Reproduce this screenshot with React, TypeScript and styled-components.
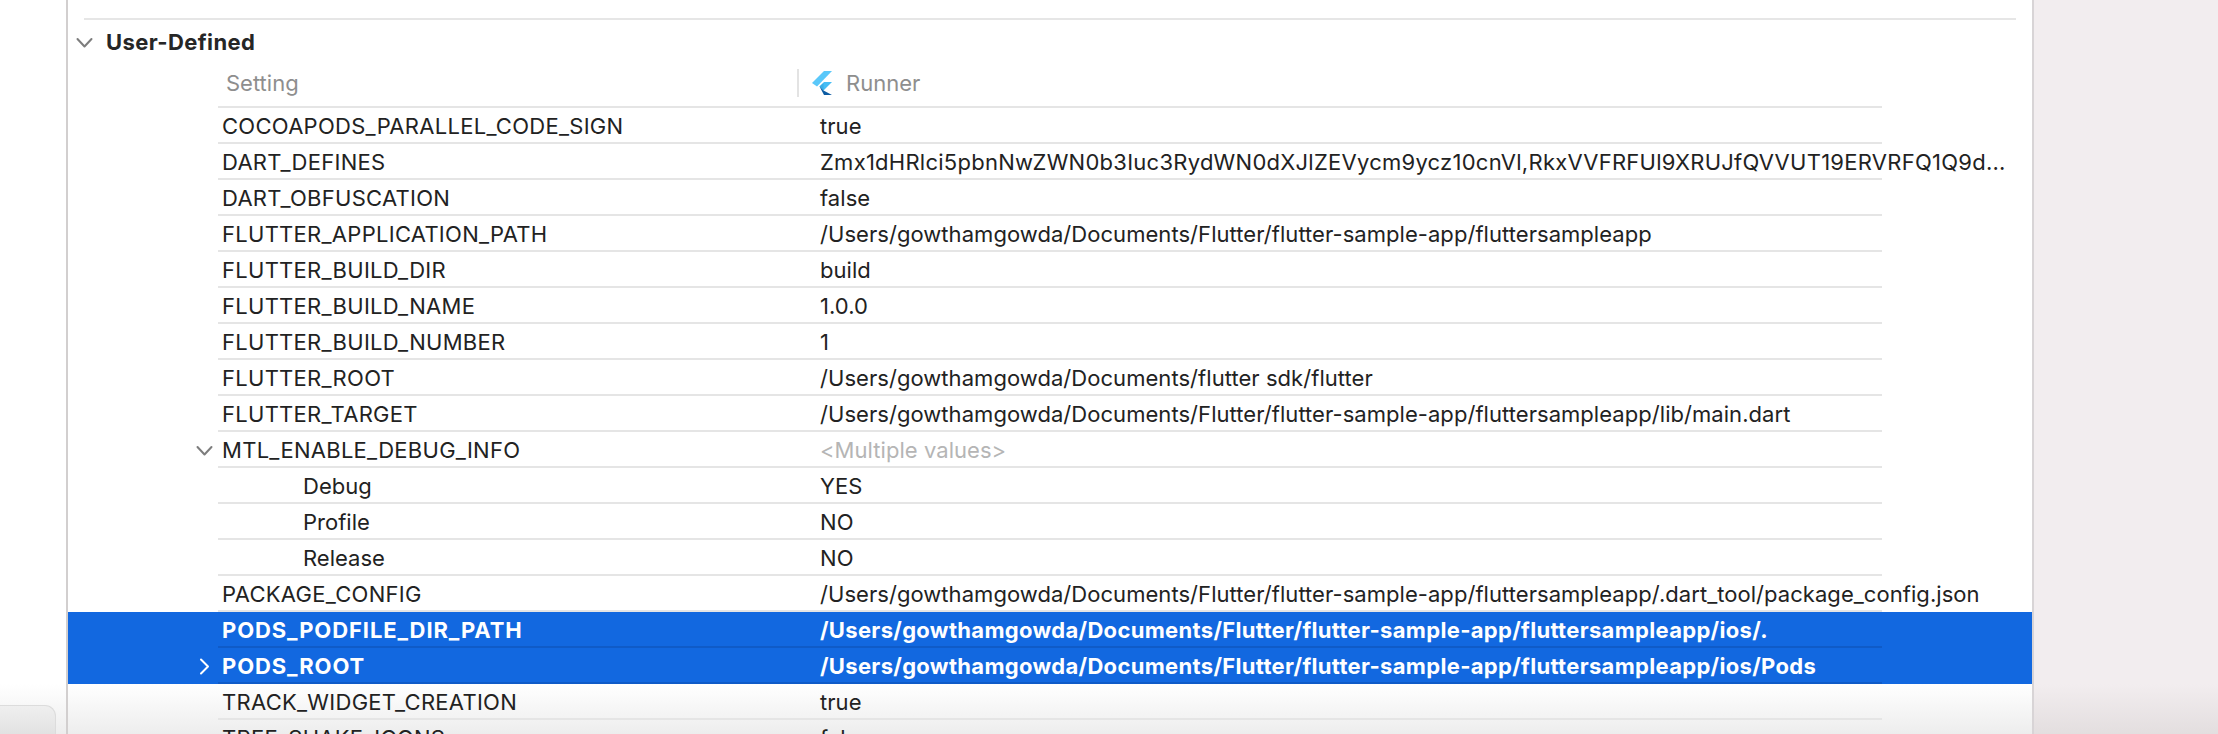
import styled, { createGlobalStyle } from 'styled-components';

const GlobalStyle = createGlobalStyle`
  html, body {
    margin: 0;
    padding: 0;
    height: 734px;
    overflow: hidden;
    background: #fff;
    font-family: Inter, "Liberation Sans", sans-serif;
  }
`;

const Page = styled.div`
  display: flex;
  width: 2218px;
  height: 734px;
  overflow: hidden;
`;

const LeftGutter = styled.div`
  width: 66px;
  display: flex;
  flex-direction: column;
  justify-content: flex-end;
  background: linear-gradient(#fff 684px, #ededed 734px);
`;

const BottomTab = styled.div`
  width: 55px;
  height: 28px;
  background: linear-gradient(#efefef, #e2e2e2);
  border: 1px solid #dcdcdc;
  border-left: none;
  border-bottom: none;
  border-top-right-radius: 11px;
`;

const Panel = styled.div`
  width: 1964px;
  height: 734px;
  padding-top: 18px;
  background: linear-gradient(#fff 684px, #ededed 734px);
  border-left: 2px solid #d2cfcf;
  border-right: 2px solid #d8d4d6;
  overflow: hidden;
`;

const RightPane = styled.div`
  flex: 1;
  background: linear-gradient(#f2edef 684px, #e3dedf 734px);
`;

const TopRule = styled.div`
  height: 2px;
  margin: 0 16px;
  background: #e6e6e6;
`;

const SectionHeader = styled.div`
  display: flex;
  align-items: center;
  gap: 13px;
  height: 44px;
  padding-left: 8px;
  font-size: 22px;
  font-weight: 700;
  letter-spacing: 0.4px;
  color: #262626;
`;

const ColumnHeader = styled.div`
  display: flex;
  align-items: center;
  width: 1664px;
  height: 44px;
  margin-left: 150px;
  padding-bottom: 4px;
  box-sizing: border-box;
  border-bottom: 2px solid #e5e5e5;
  font-size: 22px;
  color: #8e8e8e;
`;

const SettingLabel = styled.div`
  width: 579px;
  padding-left: 8px;
  box-sizing: border-box;
`;

const RunnerLabel = styled.div`
  display: flex;
  align-items: center;
  gap: 14px;
  height: 28px;
  padding-left: 13px;
  border-left: 2px solid #e3e3e3;
`;

const Row = styled.div<{ $selected?: boolean }>`
  display: flex;
  height: 36px;
  background: ${(p) => (p.$selected ? '#1268e0' : 'transparent')};
  color: ${(p) => (p.$selected ? '#fff' : '#222')};
  font-weight: ${(p) => (p.$selected ? 700 : 400)};
  font-size: 22px;
`;

const Disclosure = styled.div`
  display: flex;
  align-items: center;
  justify-content: flex-end;
  width: 150px;
  padding-right: 5px;
  box-sizing: border-box;
`;

const RowBody = styled.div<{ $selected?: boolean }>`
  display: flex;
  align-items: center;
  width: 1664px;
  height: 36px;
  padding-top: 2px;
  box-sizing: border-box;
  border-bottom: 2px solid ${(p) => (p.$selected ? '#0f5bc8' : '#e5e5e5')};
  white-space: nowrap;
`;

const Name = styled.div<{ $child?: boolean; $selected?: boolean }>`
  width: 602px;
  flex: none;
  box-sizing: border-box;
  padding-left: ${(p) => (p.$child ? '85px' : '4px')};
  letter-spacing: ${(p) => (p.$selected ? '0.9px' : p.$child ? '0' : '0.28px')};
`;

const Value = styled.div<{ $muted?: boolean; $tracking: number }>`
  color: ${(p) => (p.$muted ? '#b5b5b5' : 'inherit')};
  letter-spacing: ${(p) => p.$tracking}px;
`;

const FlutterLogo = () => (
  <svg width="20" height="24" viewBox="0 0 20 24">
    <polygon points="12,0 20,0 5,15.5 0,12" fill="#5ac8fa" />
    <polygon points="12,11 20,11 11.5,19.5 7.5,15.5" fill="#45bdf5" />
    <polygon points="7.5,15.5 11.5,12 11.5,19.5" fill="#39aee8" />
    <polygon points="7.5,15.5 11.5,19.5 20,24 12,24" fill="#0d5ca3" />
  </svg>
);

const Chevron = ({ dir, color }: { dir: 'down' | 'right'; color: string }) => (
  <svg width="17" height="17" viewBox="0 0 17 17" fill="none">
    <path
      d={dir === 'down' ? 'M1.5 5l7 7.5 7-7.5' : 'M5 1.5l7 7-7 7'}
      stroke={color}
      strokeWidth="2"
      strokeLinecap="round"
      strokeLinejoin="round"
    />
  </svg>
);

const APP = '/Users/gowthamgowda/Documents/Flutter/flutter-sample-app/fluttersampleapp';

type Setting = {
  name: string;
  value: string;
  child?: boolean;
  muted?: boolean;
  selected?: boolean;
  chevron?: 'down' | 'right';
  tracking?: number;
};

const settings: Setting[] = [
  { name: 'COCOAPODS_PARALLEL_CODE_SIGN', value: 'true' },
  {
    name: 'DART_DEFINES',
    value: 'Zmx1dHRlci5pbnNwZWN0b3Iuc3RydWN0dXJlZEVycm9ycz10cnVl,RkxVVFRFUl9XRUJfQVVUT19ERVRFQ1Q9d...',
    tracking: 0.26,
  },
  { name: 'DART_OBFUSCATION', value: 'false' },
  { name: 'FLUTTER_APPLICATION_PATH', value: APP },
  { name: 'FLUTTER_BUILD_DIR', value: 'build' },
  { name: 'FLUTTER_BUILD_NAME', value: '1.0.0' },
  { name: 'FLUTTER_BUILD_NUMBER', value: '1' },
  { name: 'FLUTTER_ROOT', value: '/Users/gowthamgowda/Documents/flutter sdk/flutter' },
  { name: 'FLUTTER_TARGET', value: `${APP}/lib/main.dart` },
  { name: 'MTL_ENABLE_DEBUG_INFO', value: '<Multiple values>', muted: true, chevron: 'down' },
  { name: 'Debug', value: 'YES', child: true },
  { name: 'Profile', value: 'NO', child: true },
  { name: 'Release', value: 'NO', child: true },
  { name: 'PACKAGE_CONFIG', value: `${APP}/.dart_tool/package_config.json` },
  { name: 'PODS_PODFILE_DIR_PATH', value: `${APP}/ios/.`, selected: true, tracking: 0.32 },
  { name: 'PODS_ROOT', value: `${APP}/ios/Pods`, selected: true, chevron: 'right', tracking: 0.32 },
  { name: 'TRACK_WIDGET_CREATION', value: 'true' },
  { name: 'TREE_SHAKE_ICONS', value: 'false' },
];

export default function App() {
  return (
    <Page>
      <GlobalStyle />
      <LeftGutter>
        <BottomTab />
      </LeftGutter>
      <Panel>
        <TopRule />
        <SectionHeader>
          <Chevron dir="down" color="#7d7d7d" />
          User-Defined
        </SectionHeader>
        <ColumnHeader>
          <SettingLabel>Setting</SettingLabel>
          <RunnerLabel>
            <FlutterLogo />
            Runner
          </RunnerLabel>
        </ColumnHeader>
        {settings.map((s) => (
          <Row key={s.name} $selected={s.selected}>
            <Disclosure>
              {s.chevron && (
                <Chevron dir={s.chevron} color={s.selected ? '#fff' : '#7d7d7d'} />
              )}
            </Disclosure>
            <RowBody $selected={s.selected}>
              <Name $child={s.child} $selected={s.selected}>{s.name}</Name>
              <Value $muted={s.muted} $tracking={s.tracking ?? 0.05}>{s.value}</Value>
            </RowBody>
          </Row>
        ))}
      </Panel>
      <RightPane />
    </Page>
  );
}
